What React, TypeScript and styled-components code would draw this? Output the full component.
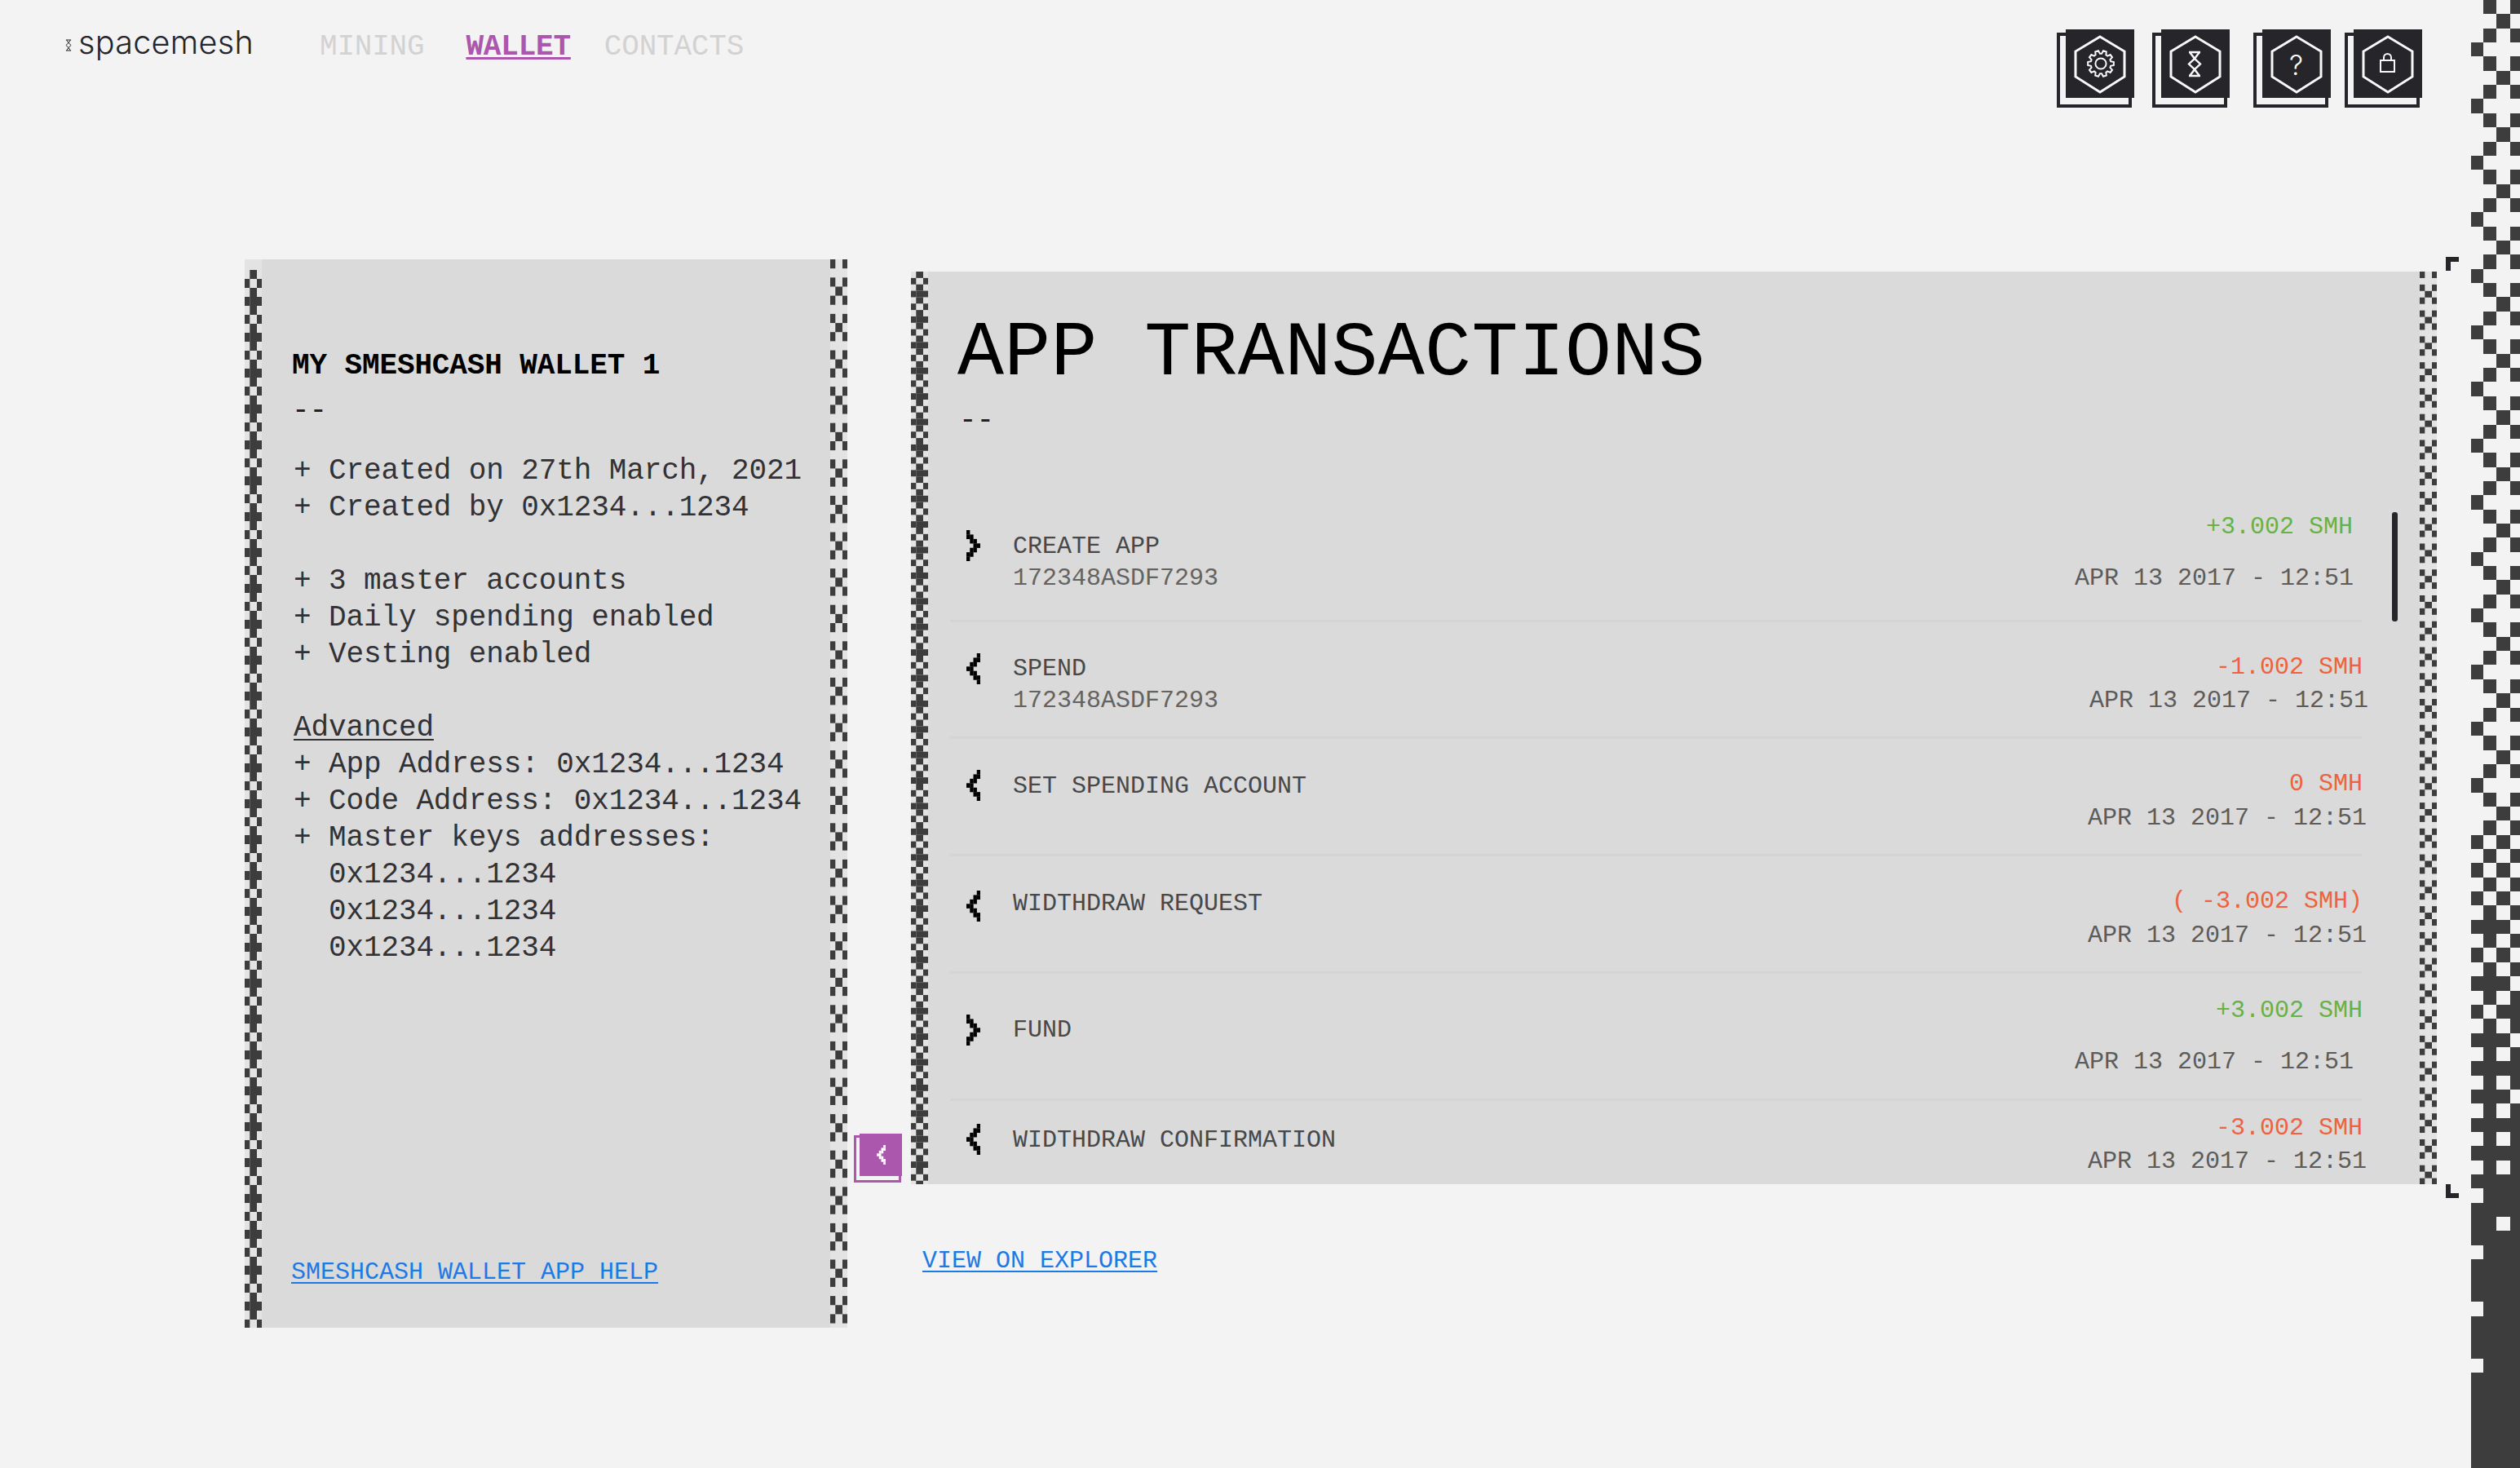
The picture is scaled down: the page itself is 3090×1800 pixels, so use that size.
import React from "react";
import styled, { createGlobalStyle } from "styled-components";

const MONO = `"Liberation Mono", "DejaVu Sans Mono", monospace`;
const DARK = "#25252a";
const CELL = "#3d3d3d";
const PURPLE = "#ab57ae";

const GlobalStyle = createGlobalStyle`
  html, body {
    margin: 0;
    padding: 0;
    background: #f3f3f3;
  }
  * {
    box-sizing: border-box;
  }
`;

/* ---- pixel strips ---- */

const PLUS = [[1], [0, 2], [1], [0, 1, 2]];
const CROSS = [[0, 2], [], [0, 2], [1]];
const STRIP_X = [0, 6.3, 15, 21];

interface StripProps {
  rows: number[][];
  rowHeight: number;
  height: number;
  offset?: number;
}

const PixelStrip = ({ rows, rowHeight, height, offset = 0 }: StripProps) => {
  const cells = [];
  const count = Math.ceil((height - offset) / rowHeight);
  for (let i = 0; i < count; i++) {
    for (const col of rows[i % rows.length]) {
      cells.push(
        <rect
          key={`${i}-${col}`}
          x={STRIP_X[col]}
          y={offset + i * rowHeight}
          width={STRIP_X[col + 1] - STRIP_X[col]}
          height={rowHeight}
        />
      );
    }
  }
  return (
    <StripSvg width="21" height={height} viewBox={`0 0 21 ${height}`}>
      {cells}
    </StripSvg>
  );
};

const StripSvg = styled.svg`
  display: block;
  flex: none;
  width: 21px;
  background: #e3e3e3;
  fill: ${CELL};
`;

/* the big strip down the right edge of the window */
const SIDE_X = [0, 15, 31, 48, 60];
const SIDE_ROW = 17.35;

const isSideCell = (col: number, i: number) => {
  const even = i % 2 === 0;
  if (col === 1) return even || i === 65 || i === 69 || i >= 73;
  if (col === 3) return even || i === 71 || i === 75 || i >= 79;
  if (col === 0) {
    if (!even) return i % 4 === 3 || i >= 59;
    return i >= 86 && ![88, 92, 96].includes(i);
  }
  if (!even) return i % 4 === 1 || i >= 59;
  return i >= 84 && i !== 86;
};

const SideStrip = () => {
  const cells = [];
  for (let i = 0; i < 104; i++) {
    const top = Math.round(i * SIDE_ROW);
    const bottom = Math.round((i + 1) * SIDE_ROW);
    for (let col = 0; col < 4; col++) {
      if (isSideCell(col, i)) {
        cells.push(
          <rect
            key={`${i}-${col}`}
            x={SIDE_X[col]}
            y={top}
            width={SIDE_X[col + 1] - SIDE_X[col]}
            height={bottom - top}
          />
        );
      }
    }
  }
  return (
    <SideSvg width="60" height="1800" viewBox="0 0 60 1800" shapeRendering="crispEdges">
      {cells}
    </SideSvg>
  );
};

const SideSvg = styled.svg`
  display: block;
  flex: none;
  fill: ${CELL};
`;

/* ---- icons ---- */

const Hexagon = () => (
  <polygon
    points="42,9 72,27 72,58 42,77 12,58 12,27"
    fill="none"
    stroke="#f8f8f8"
    strokeWidth="3"
  />
);

const gearPath = () => {
  const teeth = 10;
  const points: string[] = [];
  const step = (Math.PI * 2) / teeth;
  for (let i = 0; i < teeth; i++) {
    const a = i * step;
    [
      [12.4, -0.36],
      [16, -0.2],
      [16, 0.2],
      [12.4, 0.36],
    ].forEach(([r, t]) => {
      const angle = a + t * step;
      points.push(`${(43 + r * Math.cos(angle)).toFixed(2)},${(42 + r * Math.sin(angle)).toFixed(2)}`);
    });
  }
  return points.join(" ");
};

const HourglassLines = ({ x, y, w, h, sw }: { x: number; y: number; w: number; h: number; sw: number }) => {
  const m = x + w / 2;
  const r = x + w;
  return (
    <g fill="none" stroke="currentColor" strokeWidth={sw}>
      <path d={`M${x} ${y}H${r}M${x} ${y + h}H${r}`} />
      <path d={`M${x + 1} ${y}L${m} ${y + h * 0.27}L${r} ${y + h * 0.5}L${m} ${y + h * 0.73}L${x + 1} ${y + h}`} />
      <path d={`M${r - 1} ${y}L${m} ${y + h * 0.27}L${x} ${y + h * 0.5}L${m} ${y + h * 0.73}L${r - 1} ${y + h}`} />
    </g>
  );
};

const GearIcon = () => (
  <HexSvg viewBox="0 0 84 84">
    <Hexagon />
    <polygon points={gearPath()} fill="none" stroke="#f8f8f8" strokeWidth="2" />
    <circle cx="43" cy="42" r="6.6" fill="none" stroke="#f8f8f8" strokeWidth="2" />
  </HexSvg>
);

const HourglassIcon = () => (
  <HexSvg viewBox="0 0 84 84">
    <Hexagon />
    <HourglassLines x={34} y={28} w={14} h={29} sw={2.4} />
  </HexSvg>
);

const HelpIcon = () => (
  <HexSvg viewBox="0 0 84 84">
    <Hexagon />
    <text x="41.5" y="56" textAnchor="middle" fontFamily="Inter, sans-serif" fontWeight="300" fontSize="34" fill="#f8f8f8">
      ?
    </text>
  </HexSvg>
);

const LockIcon = () => (
  <HexSvg viewBox="0 0 84 84">
    <Hexagon />
    <rect x="33" y="38" width="17" height="14" fill="none" stroke="#f8f8f8" strokeWidth="2" />
    <path d="M37 38V34.5a4.5 4.5 0 0 1 9 0V38" fill="none" stroke="#f8f8f8" strokeWidth="2" />
  </HexSvg>
);

const HexSvg = styled.svg`
  display: block;
  width: 84px;
  height: 84px;
  color: #f8f8f8;
`;

const CHEVRON_CELLS = [[3], [2, 3], [1, 2], [0, 1], [1, 2], [2, 3], [3]];

const PixelChevron = ({ right, width, height, color }: { right?: boolean; width: number; height: number; color: string }) => (
  <svg width={width} height={height} viewBox="0 0 17 38" fill={color} style={{ display: "block", flex: "none" }}>
    {CHEVRON_CELLS.map((cols, row) =>
      cols.map((col) => (
        <rect
          key={`${row}-${col}`}
          x={(right ? 3 - col : col) * 4.25}
          y={row * 5.43}
          width={4.4}
          height={5.6}
        />
      ))
    )}
  </svg>
);

/* ---- stacked square buttons ---- */

const StackedButton = styled.div<{ $size: number; $dx: number; $dy: number; $color: string; $border: number; $gap?: number }>`
  position: relative;
  flex: none;
  width: ${(p) => p.$size + p.$dx}px;
  height: ${(p) => p.$size + p.$dy}px;
  margin-left: ${(p) => p.$gap || 0}px;
  &::before {
    content: "";
    position: absolute;
    left: 0;
    bottom: 0;
    width: ${(p) => p.$size}px;
    height: ${(p) => p.$size}px;
    border: ${(p) => p.$border}px solid ${(p) => p.$color};
  }
`;

const StackedFace = styled.div<{ $size: number; $color: string }>`
  position: absolute;
  top: 0;
  right: 0;
  width: ${(p) => p.$size}px;
  height: ${(p) => p.$size}px;
  background: ${(p) => p.$color};
  display: flex;
  align-items: center;
  justify-content: center;
`;

const TOOLS = [
  { gap: 0, icon: <GearIcon /> },
  { gap: 22, icon: <HourglassIcon /> },
  { gap: 29, icon: <HelpIcon /> },
  { gap: 17, icon: <LockIcon /> },
];

/* ---- page ---- */

const Page = styled.div`
  display: flex;
  width: 3090px;
  height: 1800px;
  overflow: hidden;
  background: #f3f3f3;
  font-family: ${MONO};
`;

const Main = styled.div`
  flex: 1;
  display: flex;
  flex-direction: column;
`;

const Header = styled.header`
  height: 318px;
  flex: none;
  display: flex;
  align-items: flex-start;
  padding: 36px 60px 0 80px;
`;

const Logo = styled.div`
  width: 231px;
  height: 40px;
  flex: none;
  display: flex;
  align-items: flex-start;
  gap: 8px;
  color: ${DARK};
  svg {
    margin-top: 8px;
  }
`;

const LogoText = styled.span`
  font-family: Inter, sans-serif;
  font-weight: 300;
  font-size: 39.5px;
  line-height: 40px;
  letter-spacing: 0.3px;
  margin-top: -4px;
`;

const Nav = styled.nav`
  display: flex;
  margin-left: 81px;
  margin-top: -1px;
`;

const NavItem = styled.a<{ $active?: boolean; $gap?: number }>`
  font-size: 36px;
  line-height: 45px;
  letter-spacing: -0.2px;
  margin-left: ${(p) => p.$gap || 0}px;
  color: ${(p) => (p.$active ? PURPLE : "#d2d2d2")};
  font-weight: ${(p) => (p.$active ? 700 : 400)};
  text-decoration: ${(p) => (p.$active ? "underline" : "none")};
  text-decoration-thickness: 3px;
  text-underline-offset: 3px;
`;

const Tools = styled.div`
  display: flex;
  margin-left: auto;
`;

const Content = styled.div`
  display: flex;
  align-items: flex-start;
  padding-left: 300px;
`;

const WalletPanel = styled.section`
  width: 739px;
  height: 1310px;
  flex: none;
  display: flex;
  background: #dadada;
`;

const WalletBody = styled.div`
  flex: 1;
  display: flex;
  flex-direction: column;
  padding: 108px 0 51px 37px;
  font-size: 36px;
  line-height: 45px;
  letter-spacing: -0.12px;
  color: #323236;
`;

const WalletTitle = styled.div`
  font-weight: 700;
  color: #000;
`;

const Dashes = styled.div<{ $top: number }>`
  margin-top: ${(p) => p.$top}px;
  color: #222;
`;

const InfoLines = styled.div`
  margin-top: 29px;
  padding-left: 2px;
  white-space: pre;
`;

const AdvancedLabel = styled.span`
  text-decoration: underline;
  text-decoration-thickness: 2px;
  text-underline-offset: 4px;
`;

const TextLink = styled.a`
  font-size: 30px;
  line-height: 34px;
  color: #1b7be6;
  text-decoration: underline;
  text-decoration-thickness: 2px;
  text-underline-offset: 4px;
`;

const HelpLink = styled(TextLink)`
  margin: auto 0 0 -1px;
  letter-spacing: 0;
`;

const Gutter = styled.div`
  width: 78px;
  height: 1134px;
  flex: none;
  display: flex;
  align-items: flex-end;
  padding: 0 0 2px 8px;
`;

const Activity = styled.div`
  width: 1871px;
  flex: none;
  margin-top: 15px;
  display: flex;
  flex-direction: column;
`;

const TxPanel = styled.section`
  position: relative;
  height: 1119px;
  display: flex;
  background: #dadada;
`;

const Corner = styled.i<{ $bottom?: boolean }>`
  position: absolute;
  right: -27px;
  width: 16px;
  height: 17px;
  border-left: 6px solid ${DARK};
  ${(p) =>
    p.$bottom
      ? `bottom: -17px; border-bottom: 6px solid ${DARK};`
      : `top: -18px; border-top: 6px solid ${DARK};`}
`;

const TxBody = styled.div`
  flex: 1;
  min-width: 0;
  display: flex;
  flex-direction: column;
  overflow: hidden;
`;

const TxHead = styled.div`
  height: 275px;
  flex: none;
  padding: 51px 0 0 36px;
`;

const TxTitle = styled.h1`
  margin: 0;
  font-size: 95px;
  line-height: 100px;
  font-weight: 400;
  letter-spacing: 0.3px;
  color: #000;
`;

const TxDashes = styled(Dashes)`
  font-size: 36px;
  line-height: 45px;
  padding-left: 2px;
`;

const TxList = styled.div`
  flex: 1;
  margin: 0 71px 0 27px;
  overflow: visible;
`;

const Row = styled.div<{ $height: number }>`
  height: ${(p) => p.$height}px;
  display: flex;
  padding-left: 20px;
  border-bottom: 3px solid #d4d4d4;
  font-size: 30px;
  line-height: 34px;
`;

const RowIcon = styled.div<{ $top: number }>`
  width: 57px;
  flex: none;
  padding-top: ${(p) => p.$top}px;
`;

const RowInfo = styled.div<{ $top: number }>`
  padding-top: ${(p) => p.$top}px;
`;

const RowTitle = styled.div`
  color: #484848;
  line-height: 39px;
`;

const RowSub = styled.div`
  color: #636363;
  line-height: 39px;
`;

const RowMeta = styled.div<{ $top: number }>`
  margin-left: auto;
  padding-top: ${(p) => p.$top}px;
  text-align: right;
`;

const Amount = styled.div<{ $out?: boolean; $inset: number }>`
  color: ${(p) => (p.$out ? "#ef6240" : "#66b245")};
  margin-right: ${(p) => p.$inset}px;
`;

const DateText = styled.div<{ $gap: number; $inset: number }>`
  color: #5c5c5c;
  margin-top: ${(p) => p.$gap}px;
  margin-right: ${(p) => p.$inset}px;
`;

const ScrollThumb = styled.i`
  position: absolute;
  top: 295px;
  right: 48px;
  width: 7px;
  height: 134px;
  border-radius: 3px;
  background: ${DARK};
`;

const ExplorerLink = styled(TextLink)`
  margin: 77px 0 0 14px;
  align-self: flex-start;
`;

const DATE = "APR 13 2017 - 12:51";

const ROWS = [
  { h: 155, dir: "in", title: "CREATE APP", sub: "172348ASDF7293", amount: "+3.002 SMH", icon: 42, info: 43, meta: 21, gap: 29, ai: 11, di: 10 },
  { h: 143, dir: "out", title: "SPEND", sub: "172348ASDF7293", amount: "-1.002 SMH", icon: 38, info: 38, meta: 38, gap: 7, ai: -1, di: -8 },
  { h: 144, dir: "out", title: "SET SPENDING ACCOUNT", amount: "0 SMH", icon: 38, info: 39, meta: 38, gap: 8, ai: -1, di: -6 },
  { h: 144, dir: "out", title: "WIDTHDRAW REQUEST", amount: "( -3.002 SMH)", icon: 42, info: 39, meta: 38, gap: 8, ai: -1, di: -6 },
  { h: 156, dir: "in", title: "FUND", amount: "+3.002 SMH", icon: 50, info: 50, meta: 28, gap: 29, ai: -1, di: 10 },
  { h: 143, dir: "out", title: "WIDTHDRAW CONFIRMATION", amount: "-3.002 SMH", icon: 28, info: 29, meta: 16, gap: 7, ai: -1, di: -6 },
];

const App = () => {
  return (
    <Page>
      <GlobalStyle />
      <Main>
        <Header>
          <Logo>
            <svg width="13" height="23" viewBox="0 0 13 23">
              <HourglassLines x={1.5} y={1} w={10} h={21} sw={1.6} />
            </svg>
            <LogoText>spacemesh</LogoText>
          </Logo>
          <Nav>
            <NavItem>MINING</NavItem>
            <NavItem $active $gap={51}>WALLET</NavItem>
            <NavItem $gap={41}>CONTACTS</NavItem>
          </Nav>
          <Tools>
            {TOOLS.map((tool, index) => (
              <StackedButton key={index} $size={84} $dx={11} $dy={12} $color={DARK} $border={4.5} $gap={tool.gap}>
                <StackedFace $size={84} $color={DARK}>{tool.icon}</StackedFace>
              </StackedButton>
            ))}
          </Tools>
        </Header>
        <Content>
          <WalletPanel>
            <PixelStrip rows={PLUS} rowHeight={11} height={1310} offset={13} />
            <WalletBody>
              <WalletTitle>MY SMESHCASH WALLET 1</WalletTitle>
              <Dashes $top={10}>--</Dashes>
              <InfoLines>
                {"+ Created on 27th March, 2021\n+ Created by 0x1234...1234\n\n+ 3 master accounts\n+ Daily spending enabled\n+ Vesting enabled\n\n"}
                <AdvancedLabel>Advanced</AdvancedLabel>
                {"\n+ App Address: 0x1234...1234\n+ Code Address: 0x1234...1234\n+ Master keys addresses:\n  0x1234...1234\n  0x1234...1234\n  0x1234...1234"}
              </InfoLines>
              <HelpLink>SMESHCASH WALLET APP HELP</HelpLink>
            </WalletBody>
            <PixelStrip rows={CROSS} rowHeight={11.15} height={1310} />
          </WalletPanel>
          <Gutter>
            <StackedButton $size={52} $dx={7} $dy={8} $color={PURPLE} $border={3}>
              <StackedFace $size={52} $color={PURPLE}>
                <PixelChevron width={13} height={24} color="#fff" />
              </StackedFace>
            </StackedButton>
          </Gutter>
          <Activity>
            <TxPanel>
              <PixelStrip rows={PLUS} rowHeight={7.85} height={1119} />
              <TxBody>
                <TxHead>
                  <TxTitle>APP TRANSACTIONS</TxTitle>
                  <TxDashes $top={9}>--</TxDashes>
                </TxHead>
                <TxList>
                  {ROWS.map((row) => (
                    <Row key={row.title} $height={row.h}>
                      <RowIcon $top={row.icon}>
                        <PixelChevron right={row.dir === "in"} width={17} height={38} color="#000" />
                      </RowIcon>
                      <RowInfo $top={row.info}>
                        <RowTitle>{row.title}</RowTitle>
                        {row.sub && <RowSub>{row.sub}</RowSub>}
                      </RowInfo>
                      <RowMeta $top={row.meta}>
                        <Amount $out={row.dir === "out"} $inset={row.ai}>{row.amount}</Amount>
                        <DateText $gap={row.gap} $inset={row.di}>{DATE}</DateText>
                      </RowMeta>
                    </Row>
                  ))}
                </TxList>
              </TxBody>
              <PixelStrip rows={CROSS} rowHeight={7.94} height={1119} />
              <ScrollThumb />
              <Corner />
              <Corner $bottom />
            </TxPanel>
            <ExplorerLink>VIEW ON EXPLORER</ExplorerLink>
          </Activity>
        </Content>
      </Main>
      <SideStrip />
    </Page>
  );
};

export default App;
